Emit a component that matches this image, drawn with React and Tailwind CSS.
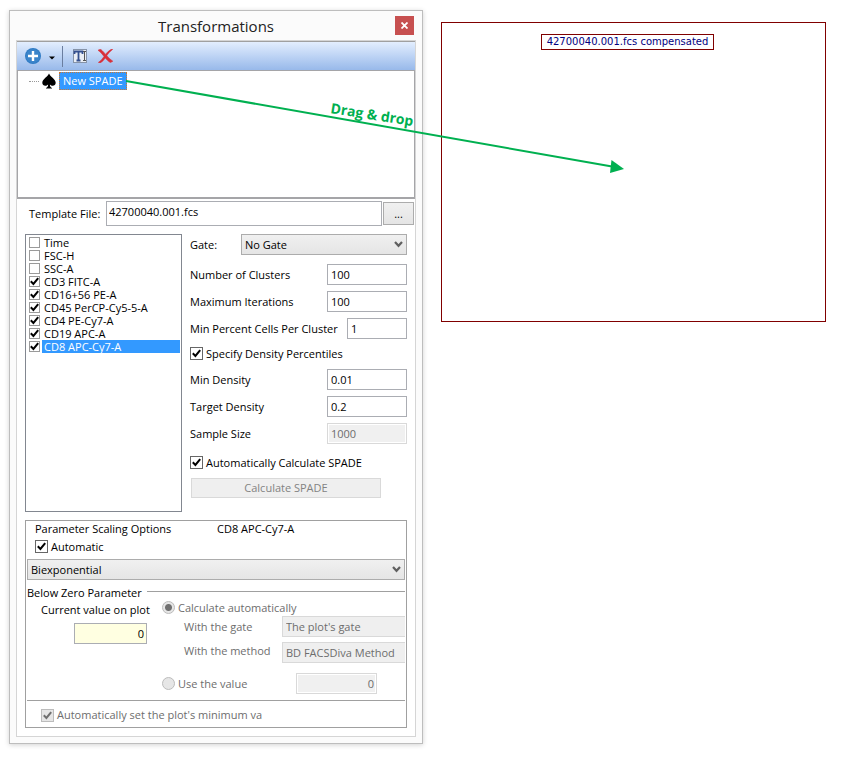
import React, { useState } from 'react';

const CHANNELS = [
  { name: 'Time', checked: false },
  { name: 'FSC-H', checked: false },
  { name: 'SSC-A', checked: false },
  { name: 'CD3 FITC-A', checked: true },
  { name: 'CD16+56 PE-A', checked: true },
  { name: 'CD45 PerCP-Cy5-5-A', checked: true },
  { name: 'CD4 PE-Cy7-A', checked: true },
  { name: 'CD19 APC-A', checked: true },
  { name: 'CD8 APC-Cy7-A', checked: true },
];

const CheckBox = ({ id, checked, onChange, disabled, small }) => (
  <span className="grid shrink-0 place-items-center">
    <input
      id={id}
      type="checkbox"
      checked={checked}
      onChange={onChange}
      disabled={disabled}
      className={`col-start-1 row-start-1 appearance-none border ${small ? 'h-[11px] w-[11px] border-[#9a9a9a]' : 'h-[13px] w-[13px] border-[#666]'} bg-white disabled:border-[#bcbcbc] disabled:bg-[#e6e6e6]`}
    />
    {checked && (
      <svg viewBox="0 0 9 9" className={`pointer-events-none col-start-1 row-start-1 h-[9px] w-[9px] ${disabled ? 'text-[#707070]' : 'text-black'}`}>
        <path d="M0.8 4.3 L3.4 7 L8.2 1.2" fill="none" stroke="currentColor" strokeWidth="2" />
      </svg>
    )}
  </span>
);

const RadioButton = ({ id, checked }) => (
  <input
    id={id}
    type="radio"
    name="belowZero"
    defaultChecked={checked}
    disabled
    className="h-[13px] w-[13px] shrink-0 appearance-none rounded-full border border-[#bcbcbc] bg-[#e6e6e6] checked:bg-[radial-gradient(circle,#707070_0_3px,#e6e6e6_4px)]"
  />
);

const Select = ({ id, label, options, className }) => (
  <span className={`grid items-center ${className}`}>
    <select
      id={id}
      aria-label={label}
      className="col-start-1 row-start-1 h-[21px] w-full appearance-none border border-[#acacac] bg-linear-to-b from-[#f0f0f0] to-[#e5e5e5] pl-[3px]"
    >
      {options.map((option) => (
        <option key={option}>{option}</option>
      ))}
    </select>
    <svg viewBox="0 0 9 7" className="pointer-events-none col-start-1 row-start-1 mr-1 h-[7px] w-[9px] justify-self-end">
      <path d="M1 1 L4.5 4.8 L8 1" fill="none" stroke="#606060" strokeWidth="2.2" />
    </svg>
  </span>
);

const NumberField = ({ id, label, value, width = 'w-20', disabled }) => (
  <div className="flex items-center justify-between">
    <label htmlFor={id}>{label}</label>
    <input
      id={id}
      type="text"
      defaultValue={value}
      disabled={disabled}
      className={`h-[21px] ${width} border border-[#abadb3] bg-white px-[3px] disabled:border-[#d9d9d9] disabled:bg-[#f0f0f0] disabled:text-[#6d6d6d] disabled:shadow-[inset_0_0_0_1px_white]`}
    />
  </div>
);

const Toolbar = () => (
  <div className="flex h-7 items-center bg-linear-to-b from-[#e3eefe] to-[#98b9ea] pl-2">
    <button type="button" aria-label="Add" className="flex items-center">
      <svg viewBox="0 0 16 16" className="h-4 w-4">
        <circle cx="8" cy="8" r="8" fill="#2f7bc4" />
        <circle cx="8" cy="8" r="7" fill="#3a84ca" />
        <path d="M8 3v10M3 8h10" stroke="white" strokeWidth="2.4" />
      </svg>
      <svg viewBox="0 0 6 4" className="mt-[3px] ml-2 h-[4px] w-[6px]">
        <path d="M0 0.5h6L3 3.5z" fill="black" />
      </svg>
    </button>
    <span className="mr-[6px] ml-[7px] h-[21px] w-px bg-[#6a7ea0]" />
    <button type="button" aria-label="Rename" className="ml-1">
      <svg viewBox="0 0 14 14" className="h-[14px] w-[14px]">
        <rect x="0.5" y="0.5" width="13" height="13" fill="#e9eef5" stroke="#8593a8" />
        <path d="M1.5 5V2.5H9.5V5M5.5 2.5V11.5M3.5 11.5H7.5" fill="none" stroke="#34508f" strokeWidth="1.8" />
        <path d="M10 2.5h3M10 11.5h3M11.5 2.5v9" stroke="#555" strokeWidth="1" />
      </svg>
    </button>
    <button type="button" aria-label="Delete" className="ml-[11px]">
      <svg viewBox="0 0 15 14" className="h-[14px] w-[15px]">
        <path
          d="M0 1.2 L2.6 0.2 C5 2.2 6.2 3.8 7.6 5.4 C9.2 3.2 11.3 1.2 14 0 L14.6 0.4 C12 2.3 10.2 4.4 8.8 6.7 C10.8 9 12.6 10.8 14.8 12.2 L12.4 13.6 C10.2 12.2 8.8 10.6 7.3 8.9 C5.8 11 4.2 12.8 2.2 14 L0.4 13.4 C3 11.6 4.6 9.6 6 7.4 C4.2 5 2.4 2.8 0 1.2Z"
          fill="#d9303a"
          stroke="#d9303a"
          strokeWidth="0.6"
        />
      </svg>
    </button>
  </div>
);

const Tree = () => (
  <div className="h-[129px] border border-b-2 border-[#a5a5a8] bg-white pt-px pl-[11px]">
    <div className="flex items-center">
      <span className="w-[10px] border-t border-dotted border-[#999]" />
      <svg viewBox="0 0 14 16" className="ml-[3px] h-4 w-[14px]">
        <path d="M7 0.5 C8.5 4 13.7 6.2 13.7 9.7 C13.7 12.8 10 13.8 7.9 11.4 C7.9 13.4 8.6 14.5 10 15 V15.5 H4 V15 C5.4 14.5 6.1 13.4 6.1 11.4 C4 13.8 0.3 12.8 0.3 9.7 C0.3 6.2 5.5 4 7 0.5Z" fill="black" />
      </svg>
      <button type="button" className="ml-[3px] h-[18px] border border-dotted border-[#cc7832] bg-[#3399ff] px-[3px] leading-4 text-white">
        New SPADE
      </button>
    </div>
  </div>
);

const ChannelList = () => {
  const [channels, setChannels] = useState(CHANNELS);
  const [selected, setSelected] = useState('CD8 APC-Cy7-A');

  const toggle = (name) => {
    setSelected(name);
    setChannels((prev) => prev.map((c) => (c.name === name ? { ...c, checked: !c.checked } : c)));
  };

  return (
    <ul className="w-[157px] shrink-0 border border-[#828790] bg-white px-px pt-px leading-[13px]">
      {channels.map((c) => (
        <li key={c.name} className="flex h-[13px] items-center pl-[2px]">
          <CheckBox id={c.name} small checked={c.checked} onChange={() => toggle(c.name)} />
          <label
            htmlFor={c.name}
            className={`ml-[2px] grow pl-[2px] ${selected === c.name ? 'bg-[#3399ff] text-white' : ''}`}
          >
            {c.name}
          </label>
        </li>
      ))}
    </ul>
  );
};

const SpadeSettings = () => {
  const [density, setDensity] = useState(true);
  const [auto, setAuto] = useState(true);

  return (
    <div className="flex grow flex-col">
      <div className="mb-[9px] flex items-center justify-between">
        <label htmlFor="gate">Gate:</label>
        <Select id="gate" options={['No Gate']} className="w-[166px]" />
      </div>
      <div className="flex flex-col gap-[6px]">
        <NumberField id="clusters" label="Number of Clusters" value="100" />
        <NumberField id="iterations" label="Maximum Iterations" value="100" />
        <NumberField id="minCells" label="Min Percent Cells Per Cluster" value="1" width="w-[60px]" />
      </div>
      <div className="mt-2 mb-[9px] flex h-[13px] items-center gap-[3px]">
        <CheckBox id="density" checked={density} onChange={() => setDensity(!density)} />
        <label htmlFor="density">Specify Density Percentiles</label>
      </div>
      <div className="flex flex-col gap-[6px]">
        <NumberField id="minDensity" label="Min Density" value="0.01" />
        <NumberField id="targetDensity" label="Target Density" value="0.2" />
        <NumberField id="sampleSize" label="Sample Size" value="1000" disabled />
      </div>
      <div className="mt-3 mb-[9px] flex h-[13px] items-center gap-[3px]">
        <CheckBox id="auto" checked={auto} onChange={() => setAuto(!auto)} />
        <label htmlFor="auto">Automatically Calculate SPADE</label>
      </div>
      <button type="button" disabled className="mr-[26px] ml-px h-5 border border-[#d9d9d9] bg-[#efefef] text-[#838383]">
        Calculate SPADE
      </button>
    </div>
  );
};

const ScalingOptions = () => {
  const [automatic, setAutomatic] = useState(true);

  return (
    <section className="mx-2 mt-2 border border-[#a0a0a0] bg-white pl-px">
      <div className="flex h-4 items-center pl-2">
        <h2 className="w-[182px]">Parameter Scaling Options</h2>
        <span>CD8 APC-Cy7-A</span>
      </div>
      <div className="mt-[3px] flex h-[13px] items-center gap-[3px] pl-2">
        <CheckBox id="automatic" checked={automatic} onChange={() => setAutomatic(!automatic)} />
        <label htmlFor="automatic">Automatic</label>
      </div>
      <Select id="scale" label="Scale" options={['Biexponential']} className="mt-[6px] mr-px" />

      <div className="mt-[5px] flex h-4 items-center gap-[5px]">
        <h3>Below Zero Parameter</h3>
        <span className="mr-px mb-[3px] h-px grow bg-[#a0a0a0]" />
      </div>
      <div className="flex text-[#6d6d6d]">
        <div className="w-[135px] shrink-0 pl-[14px] text-black">
          <label htmlFor="current" className="block leading-[18px]">Current value on plot</label>
          <input id="current" type="text" readOnly value="0" className="mt-1 ml-[33px] block h-[21px] w-[73px] border border-[#abadb3] bg-[#ffffe1] px-[2px] text-right" />
        </div>
        <div className="min-w-0 grow overflow-hidden">
          <div className="flex h-[13px] items-center gap-[3px]">
            <RadioButton id="calcAuto" checked />
            <label htmlFor="calcAuto">Calculate automatically</label>
          </div>
          <div className="mt-[2px] mr-px flex h-[21px] items-center pl-[22px]">
            <label htmlFor="plotGate" className="w-[98px] shrink-0">With the gate</label>
            <select id="plotGate" disabled className="h-[21px] min-w-0 grow appearance-none border border-r-0 border-[#d9d9d9] bg-[#efefef] pl-[3px] opacity-100">
              <option>The plot&apos;s gate</option>
            </select>
          </div>
          <div className="mt-[5px] mr-px flex h-[21px] items-center pl-[22px]">
            <label htmlFor="method" className="w-[98px] shrink-0 pb-1">With the method</label>
            <select id="method" disabled className="h-[21px] min-w-0 grow appearance-none border border-r-0 border-[#d9d9d9] bg-[#efefef] pl-[3px] opacity-100">
              <option>BD FACSDiva Method</option>
            </select>
          </div>
          <div className="mt-[10px] flex h-[21px] items-center gap-[3px]">
            <RadioButton id="useValue" />
            <label htmlFor="useValue" className="w-[115px]">Use the value</label>
            <input type="text" aria-label="Value" disabled defaultValue="0" className="h-[21px] w-[81px] border border-[#d9d9d9] bg-[#f0f0f0] px-[2px] text-right shadow-[inset_0_0_0_1px_white]" />
          </div>
        </div>
      </div>
      <div className="mt-[6px] mr-px flex h-[27px] items-center gap-[3px] border-t border-[#a0a0a0] pt-[2px] pl-[14px] text-[#6d6d6d]">
        <CheckBox id="plotMin" checked disabled />
        <label htmlFor="plotMin">Automatically set the plot&apos;s minimum va</label>
      </div>
    </section>
  );
};

const TransformationsDialog = () => (
  <div className="self-start border border-[#bdbdbd] bg-[#fbfbfb] px-[6px] pb-[6px] shadow-[0_1px_5px_rgba(0,0,0,0.18)]">
    <header className="grid h-[29px] grid-cols-[1fr_auto_1fr] items-center">
      <h1 className="col-start-2 text-[15px] leading-5 text-[#222]">Transformations</h1>
      <button type="button" aria-label="Close" className="mr-[2px] flex h-[19px] w-[19px] items-center justify-center self-center justify-self-end bg-[#c75050]">
        <svg viewBox="0 0 7 7" className="h-[7px] w-[7px]">
          <path d="M0.5 0.5l6 6M6.5 0.5l-6 6" stroke="white" strokeWidth="1.8" />
        </svg>
      </button>
    </header>
    <div className="border border-[#d5d5d5] bg-white pb-2">
      <div className="border-t border-[#a0a0a0]">
        <Toolbar />
        <Tree />
      </div>
      <div className="mt-[2px] flex items-center pr-px pl-3">
        <label htmlFor="template" className="w-[77px] shrink-0">Template File:</label>
        <input id="template" type="text" defaultValue="42700040.001.fcs" className="h-[25px] min-w-0 grow border border-[#abadb3] px-[2px] pb-[5px]" />
        <button type="button" className="ml-px h-[23px] w-[31px] border border-[#acacac] bg-linear-to-b from-[#f0f0f0] to-[#e5e5e5]">...</button>
      </div>
      <div className="mx-2 mt-2 flex gap-2">
        <ChannelList />
        <div className="grow pb-[14px]">
          <SpadeSettings />
        </div>
      </div>
      <ScalingOptions />
    </div>
  </div>
);

const PlotCanvas = () => (
  <div className="mt-3 h-[300px] border border-[#800000] bg-white pt-[11px] pr-3 text-center">
    <span className="inline-block h-4 border border-[#800000] px-[5px] align-top font-['DejaVu_Sans',sans-serif] text-[10px] leading-[14px] text-[#000080]">
      42700040.001.fcs compensated
    </span>
  </div>
);

const DragArrow = () => (
  <svg viewBox="0 0 520 110" className="pointer-events-none absolute top-[70px] left-[120px] h-[110px] w-[520px]">
    <path d="M6 11 L492 96.5" stroke="#00b050" strokeWidth="2" />
    <path d="M504 99 L490 103 L491.5 90Z" fill="#00b050" />
    <text x="210" y="43" transform="rotate(9 210 43)" className="fill-[#00b050] font-['Open_Sans',sans-serif] text-[14px] font-bold">
      Drag &amp; drop
    </text>
  </svg>
);

export default function App() {
  return (
    <main className="relative grid min-h-screen grid-cols-[414fr_385fr] gap-[18px] bg-white pt-[10px] pr-5 pb-4 pl-[9px] font-['Open_Sans',sans-serif] text-[11px] leading-4 text-black">
      <TransformationsDialog />
      <PlotCanvas />
      <DragArrow />
    </main>
  );
}
